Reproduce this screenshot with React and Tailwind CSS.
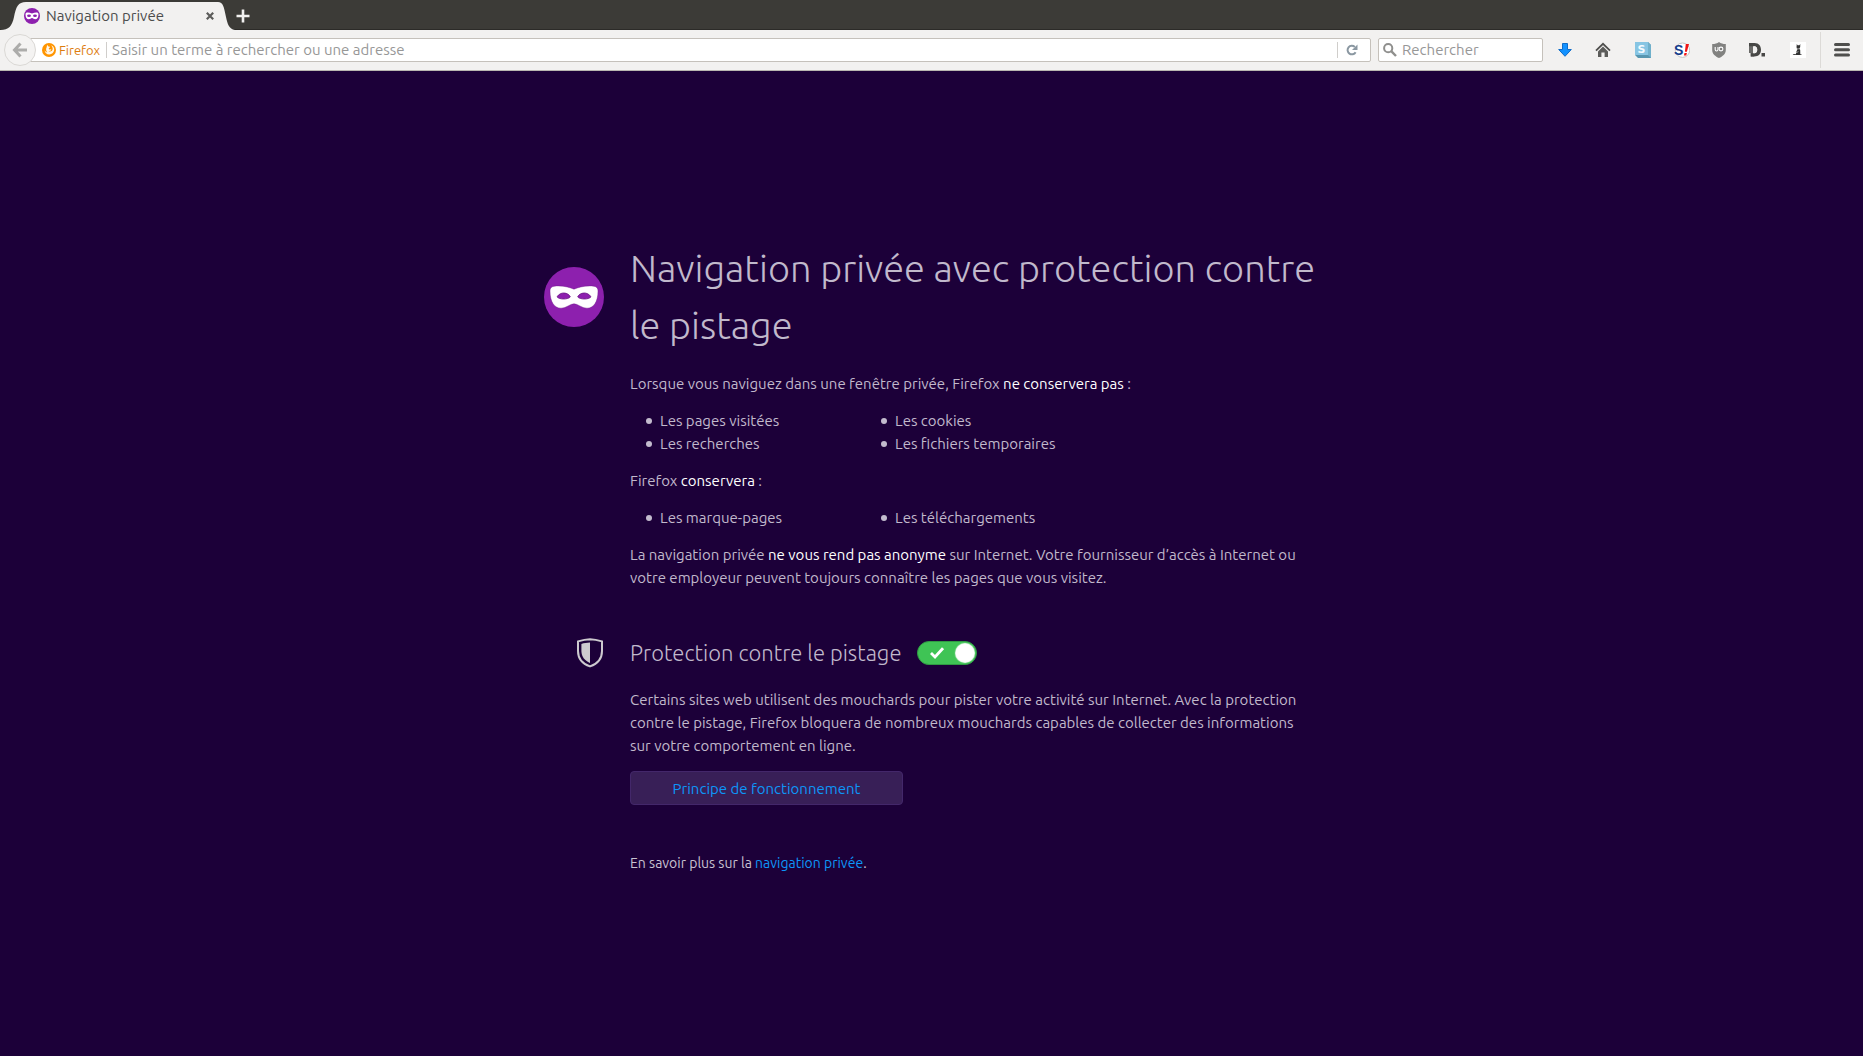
function MaskIcon({ className }) {
  return (
    <svg viewBox="0 0 60 60" className={className} aria-hidden="true">
      <circle cx="30" cy="30" r="30" fill="#8d20ae" />
      <path
        d="M30 22.2C26 20.6 21 18.9 14 18.9C9.500 18.900 6 19.500 6 24C6 35 10.500 41.200 17 41.200C22.500 41.200 26 36.800 30 36.800C34 36.800 37.500 41.200 43 41.200C49.500 41.200 54 35 54 24C54 19.500 50.500 18.900 46 18.900C39 18.900 34 20.600 30 22.200Z"
        fill="#fff"
        stroke="#6b1487"
        strokeOpacity=".5"
        strokeWidth=".8"
      />
      <path
        d="M13 29.800C14.800 27 17.500 26 19.800 26C23 26 25.800 28 26.300 30C25 31.300 22.500 32 19.500 32C16.500 32 14.200 31.200 13 29.800ZM47 29.800C45.200 27 42.500 26 40.200 26C37 26 34.200 28 33.700 30C35 31.300 37.500 32 40.500 32C43.500 32 45.800 31.200 47 29.800Z"
        fill="#8d20ae"
        stroke="#6b1487"
        strokeWidth=".8"
      />
    </svg>
  );
}

function TabMaskIcon() {
  return (
    <svg viewBox="0 0 16 16" className="size-4" aria-hidden="true">
      <circle cx="8" cy="8" r="8" fill="#8d20ae" />
      <path d="M8 5.400C6.500 4.800 5 4.600 3.600 4.600C2.200 4.600 1.500 5.100 1.500 6.300C1.500 9.600 2.800 11.300 4.700 11.300C6.200 11.300 6.900 10 8 10C9.100 10 9.800 11.300 11.300 11.300C13.200 11.300 14.500 9.600 14.500 6.300C14.500 5.100 13.800 4.600 12.400 4.600C11 4.600 9.500 4.800 8 5.400Z" fill="#fff" />
      <ellipse cx="5" cy="7.800" rx="1.900" ry="1.200" fill="#8d20ae" />
      <ellipse cx="11" cy="7.800" rx="1.900" ry="1.200" fill="#8d20ae" />
    </svg>
  );
}

function BackIcon() {
  return (
    <svg viewBox="0 0 16 16" className="size-4" fill="none" stroke="#acacaa" strokeWidth="3" aria-hidden="true">
      <path d="M8.500 1.500L2.500 8L8.500 14.500M2.500 8H15" />
    </svg>
  );
}

function FirefoxIcon() {
  return (
    <svg viewBox="0 0 14 14" className="size-3.5" aria-hidden="true">
      <circle cx="7" cy="7" r="7" fill="#ff9500" />
      <path d="M5.200 1.900C5.800 2.300 6.200 2.900 6.400 3.500L8 3.700C8 4.500 7.200 4.900 6.800 5.200C6.800 6.300 7.700 6.700 8.600 6.200C9.300 6.200 9.400 6.800 9 7.200C8.300 8 7.300 8.100 6.500 7.900C8.200 9.200 10.200 8.300 10.600 6.500C10.900 5 10.200 3.400 9.100 2.300C11.200 2.900 12.400 5 12.200 7.100C11.800 9.800 9.800 11.400 7.300 11.400C4.600 11.400 2.800 9.600 2.600 7.200C3.400 8.600 4.400 9.200 5.400 9.200C4.300 8.200 3.900 6.800 4.200 5.500C4.300 4.900 4.500 4.500 4.800 4.100C4.700 3.300 4.800 2.600 5.200 1.900Z" fill="#fff" fillOpacity=".92" />
    </svg>
  );
}

function ReloadIcon() {
  return (
    <svg viewBox="0 0 12 12" className="size-3" aria-hidden="true">
      <path d="M9.600 8.200A4.300 4.300 0 1 1 8.800 2.900" fill="none" stroke="#8a97a1" strokeWidth="2" />
      <path d="M11.500 .5V6H6Z" fill="#8a97a1" />
    </svg>
  );
}

function SearchIcon() {
  return (
    <svg viewBox="0 0 14 14" className="size-3.5 shrink-0" fill="none" stroke="#8f8f8d" aria-hidden="true">
      <circle cx="5.200" cy="5.200" r="4.100" strokeWidth="2" />
      <path d="M8.200 8.200L13 13" strokeWidth="2.400" />
    </svg>
  );
}

function DownloadIcon() {
  return (
    <svg viewBox="0 0 16 16" className="size-4" aria-hidden="true">
      <path d="M5.500 1.500H10.500V7.500H14.300L8 14.300L1.700 7.500H5.500Z" fill="#1492ff" stroke="#0f6cc9" strokeLinejoin="round" />
    </svg>
  );
}

function HomeIcon() {
  return (
    <svg viewBox="0 0 16 16" className="size-4" aria-hidden="true">
      <path d="M1 8.600L8 1.800L15 8.600" fill="none" stroke="#4f4f4d" strokeWidth="1.800" />
      <path d="M8 4.600L13 9.400V15H9.600V10.500H6.400V15H3V9.400Z" fill="#5c5c5a" />
    </svg>
  );
}

function CubeIcon() {
  return (
    <svg viewBox="0 0 16 16" className="size-4" aria-hidden="true">
      <path d="M0 0H13L16 3V16H3L0 13Z" fill="#5796b0" />
      <path d="M13 0L16 3V16L13 13Z" fill="#6fb0cb" />
      <rect width="13" height="13" fill="#87c5e3" />
      <text x="6.500" y="10.500" textAnchor="middle" fontFamily="DejaVu Sans" fontWeight="700" fontSize="11" fill="#f4fbff">S</text>
    </svg>
  );
}

function SIcon() {
  return (
    <svg viewBox="0 0 16 16" className="size-4" aria-hidden="true">
      <circle cx="8.500" cy="8.200" r="7.200" fill="#fff" stroke="#c4c4c4" />
      <text x="0" y="12.500" fontFamily="Liberation Sans" fontWeight="700" fontSize="14" fill="#143c8c">S</text>
      <path d="M11.800 2H15L12.900 9.800H10.900ZM10.500 11H12.900L12.200 13.400H9.900Z" fill="#f01414" />
    </svg>
  );
}

function ShieldBadgeIcon() {
  return (
    <svg viewBox="0 0 16 16" className="size-4" aria-hidden="true">
      <path d="M8 0C9.800 1.500 12 2 14.800 2V8C14.800 12 11.500 14.500 8 16C4.500 14.500 1.200 12 1.200 8V2C4 2 6.200 1.500 8 0Z" fill="#828280" />
      <path d="M4.200 5V7.600Q4.200 9 5.600 9T7 7.600V5" fill="none" stroke="#fff" strokeWidth="1.100" />
      <circle cx="10" cy="7" r="1.900" fill="none" stroke="#fff" strokeWidth="1.100" />
    </svg>
  );
}

function DIcon() {
  return (
    <svg viewBox="0 0 16 16" className="size-4" aria-hidden="true">
      <path d="M0 1H5V14.500H1.500V11H0Z" fill="#6a6a68" />
      <path d="M0 1H5.500C10 1 12 4 12 7.800C12 12 9.500 14.500 5.500 14.500H2V11.300H5.200C7.200 11.300 8.200 10 8.200 7.800C8.200 5.600 7.200 4.200 5.200 4.200H0Z" fill="#484846" />
      <path d="M4 4.300H5.200C7.200 4.300 8.200 5.600 8.200 7.800C8.200 10 7.200 11.200 5.200 11.200H4Z" fill="#f2f1f0" />
      <rect x="12.500" y="11" width="3.500" height="3.500" fill="#484846" />
    </svg>
  );
}

function DogIcon() {
  return (
    <svg viewBox="0 0 16 16" className="size-4" aria-hidden="true">
      <rect width="16" height="16" fill="#fff" />
      <path d="M6.800 2L7.600 3.200H9.400L10.300 2L10.200 5L9.400 6.400L10.200 8L10.300 12.200H11.500V13H4.200L2.800 12.400L3 12L5.800 12.200L6.600 9L7.400 7.500L6.500 5.200Z" fill="#333" />
      <path d="M6.500 6.800H10M6 10.800L8.500 9.600" stroke="#ccc" strokeWidth=".7" />
    </svg>
  );
}

function ShieldIcon() {
  return (
    <svg viewBox="0 0 26 30" className="h-[30px] w-[26px]" aria-hidden="true">
      <path d="M13 1.200C16.500 1.300 20.500 2 25 3.400V13C25 20.500 20 26 13 28.400C6 26 1 20.500 1 13V3.400C5.500 2 9.500 1.300 13 1.200Z" fill="none" stroke="#cdcacf" strokeWidth="2" />
      <path d="M13 4.600V25C7.500 22.500 4.400 18.500 4.400 13V6C7 5.200 10 4.700 13 4.600Z" fill="#cdcacf" />
    </svg>
  );
}

const toolbarItems = [
  { label: "Téléchargements", Icon: DownloadIcon, width: "w-[38px]" },
  { label: "Accueil", Icon: HomeIcon, width: "w-[38px]" },
  { label: "Stylish", Icon: CubeIcon, width: "w-[42px]" },
  { label: "Signaler", Icon: SIcon, width: "w-9" },
  { label: "Bloqueur de contenu", Icon: ShieldBadgeIcon, width: "w-[38px]" },
  { label: "Disconnect", Icon: DIcon, width: "w-[38px]" },
  { label: "Extension", Icon: DogIcon, width: "w-11" },
];

function TabStrip() {
  return (
    <div className="flex h-[30px] items-end bg-[#3c3b37] shadow-[inset_0_-1px_0_#2c2b28]">
      <svg viewBox="0 0 26 28" className="h-7 w-[26px] shrink-0" aria-hidden="true">
        <path d="M0 28C9 28 12 24 14 15C16 5 18 0 26 0V28Z" fill="#f2f1f0" />
      </svg>
      <div className="flex h-7 w-48 items-center bg-[#f2f1f0]">
        <div className="-ml-0.5 flex flex-1 items-center gap-1.5">
          <TabMaskIcon />
          <span className="text-[15px] leading-5 text-[#4c4c4c]">Navigation privée</span>
        </div>
        <button type="button" aria-label="Fermer l’onglet" className="flex size-4 items-center justify-center">
          <svg viewBox="0 0 8 8" className="size-2" stroke="#5c5c5a" strokeWidth="2.200" aria-hidden="true">
            <path d="M.8 .8L7.200 7.200M7.200 .8L.8 7.200" />
          </svg>
        </button>
      </div>
      <svg viewBox="0 0 17 28" className="h-7 w-[17px] shrink-0" aria-hidden="true">
        <path d="M17 28C11 27 9.500 22 8 15C6 5 5 0 0 0V28Z" fill="#f2f1f0" />
      </svg>
      <button type="button" aria-label="Nouvel onglet" className="flex h-7 w-4 items-center justify-center">
        <svg viewBox="0 0 14 14" className="size-3.5 shrink-0" stroke="#f2f1f0" strokeWidth="2.600" aria-hidden="true">
          <path d="M7 .5V13.500M.5 7H13.500" />
        </svg>
      </button>
    </div>
  );
}

function Toolbar() {
  return (
    <div className="flex h-[41px] items-center border-b border-[#b9b6b1] bg-[#f2f1f0]">
      <button type="button" aria-label="Précédent" className="z-10 ml-1 flex size-8 shrink-0 items-center justify-center rounded-full border border-[#dad8d5] bg-[#f4f3f2]">
        <BackIcon />
      </button>
      <div className="-ml-1.5 flex h-6 flex-1 items-center rounded-r-xs border border-[#c5c1bb] bg-white pl-[11px]">
        <button type="button" className="flex items-center gap-[3px] text-[13px] leading-5 text-[#dd7c0e]">
          <FirefoxIcon />
          Firefox
        </button>
        <div className="ml-1.5 h-4 w-px bg-[#d0cecb]" />
        <input
          aria-label="Adresse"
          placeholder="Saisir un terme à rechercher ou une adresse"
          className="h-5 min-w-0 flex-1 px-[5px] text-[15px] outline-none placeholder:text-[#979797]"
        />
        <button type="button" aria-label="Actualiser" className="flex h-4 w-[33px] items-center justify-center border-l border-[#d0cecb] pr-1">
          <ReloadIcon />
        </button>
      </div>
      <label className="ml-[7px] flex h-6 w-[165px] items-center gap-[5px] rounded-xs border border-[#c5c1bb] bg-white pl-1">
        <SearchIcon />
        <input aria-label="Recherche" placeholder="Rechercher" className="h-5 min-w-0 flex-1 text-[15px] outline-none placeholder:text-[#979797]" />
      </label>
      <div className="ml-[3px] flex items-center">
        {toolbarItems.map(({ label, Icon, width }) => (
          <button key={label} type="button" aria-label={label} className={`${width} flex h-8 items-center justify-center`}>
            <Icon />
          </button>
        ))}
      </div>
      <button type="button" aria-label="Menu" className="flex h-9 w-[43px] items-center justify-center border-l border-[#dcdad7]">
        <svg viewBox="0 0 16 14" className="h-3.5 w-4" fill="#4f4f4d" aria-hidden="true">
          <rect y="0" width="16" height="3" rx="1.500" />
          <rect y="5.300" width="16" height="3" rx="1.500" />
          <rect y="10.600" width="16" height="3" rx="1.500" />
        </svg>
      </button>
    </div>
  );
}

function TwoColumnList({ items }) {
  return (
    <ul className="grid w-[470px] grid-cols-2">
      {items.map((item) => (
        <li key={item} className="flex items-center gap-2 pl-4 before:size-1.5 before:rounded-full before:bg-[#c3bbce]">
          {item}
        </li>
      ))}
    </ul>
  );
}

export default function App() {
  return (
    <div className="flex min-h-screen flex-col bg-[#1c0039] font-['Ubuntu','Noto_Sans',sans-serif]">
      <header>
        <TabStrip />
        <Toolbar />
      </header>
      <main className="flex flex-1 flex-col items-center justify-center pb-3.5 text-[15px] leading-[23px] text-[#c1b9cc]">
        <div className="w-full max-w-[775px]">
          <div className="flex items-center gap-[26px]">
            <MaskIcon className="size-[60px] shrink-0" />
            <h1 className="text-[38px] leading-[57px] font-light">
              Navigation privée avec protection contre
              <br />
              le pistage
            </h1>
          </div>
          <section className="mt-[18px] flex flex-col gap-3.5 pl-[86px]">
            <p>
              Lorsque vous naviguez dans une fenêtre privée, Firefox <strong className="font-normal text-white">ne conservera pas</strong> :
            </p>
            <TwoColumnList items={["Les pages visitées", "Les cookies", "Les recherches", "Les fichiers temporaires"]} />
            <p>
              Firefox <strong className="font-normal text-white">conservera</strong> :
            </p>
            <TwoColumnList items={["Les marque-pages", "Les téléchargements"]} />
            <p>
              La navigation privée <strong className="font-normal text-white">ne vous rend pas anonyme</strong> sur Internet. Votre fournisseur d’accès à Internet ou
              <br />
              votre employeur peuvent toujours connaître les pages que vous visitez.
            </p>
          </section>
          <div className="mt-[49px] flex items-center">
            <div className="flex w-[59px] justify-end">
              <ShieldIcon />
            </div>
            <h2 id="protection" className="ml-[27px] text-[22px] leading-[30px] font-light">
              Protection contre le pistage
            </h2>
            <div className="relative ml-4 h-6 w-[60px]">
              <input
                type="checkbox"
                defaultChecked
                aria-labelledby="protection"
                className="peer block h-6 w-[60px] appearance-none rounded-full border border-[#2f9b43] bg-[#777] checked:bg-[#3fc455]"
              />
              <svg viewBox="0 0 14 12" className="pointer-events-none absolute top-1.5 left-[13px] h-3 w-3.5" fill="none" stroke="#fff" strokeWidth="2.800" aria-hidden="true">
                <path d="M1 6L5 10L13 1.200" />
              </svg>
              <span className="pointer-events-none absolute top-[3px] right-[3px] size-[18px] rounded-full bg-white shadow-[0_0_1px_1px_#ffffff]" />
            </div>
          </div>
          <section className="mt-5 pl-[86px]">
            <p>
              Certains sites web utilisent des mouchards pour pister votre activité sur Internet. Avec la protection
              <br />
              contre le pistage, Firefox bloquera de nombreux mouchards capables de collecter des informations
              <br />
              sur votre comportement en ligne.
            </p>
            <a href="#principe" className="mt-3.5 flex h-[34px] w-[273px] items-center justify-center rounded-sm border border-[#43276a] bg-[#381f57] text-[#0c96f8]">
              Principe de fonctionnement
            </a>
            <p className="mt-12 text-sm leading-5 text-[#c9c2d2]">
              En savoir plus sur la{" "}
              <a href="#navigation-privee" className="text-[#0c96f8]">
                navigation privée
              </a>
              .
            </p>
          </section>
        </div>
      </main>
    </div>
  );
}
